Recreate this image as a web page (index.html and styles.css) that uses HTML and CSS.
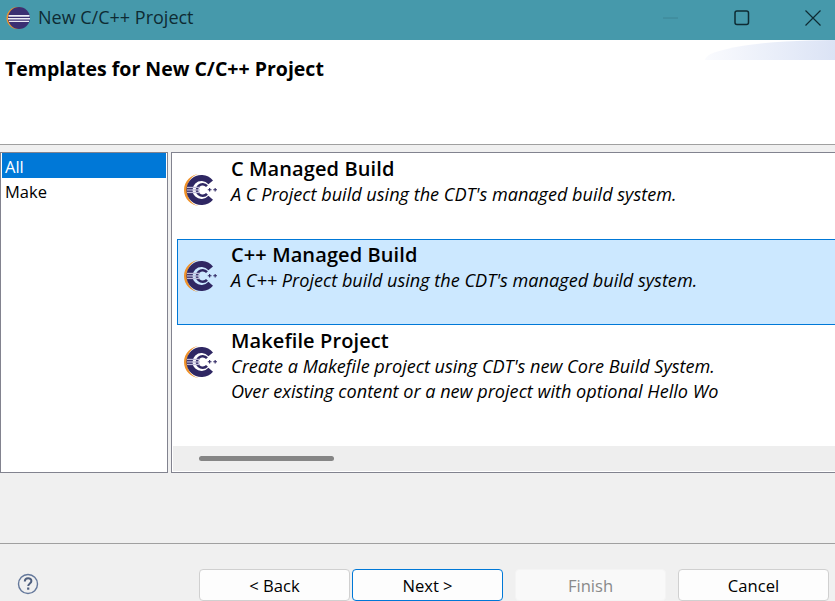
FILE: index.html
```html
<!DOCTYPE html>
<html lang="en">
<head>
<meta charset="utf-8">
<title>New C/C++ Project</title>
<link rel="stylesheet" href="styles.css">
</head>
<body>
<svg class="defs" width="0" height="0">
  <symbol id="cdt" viewBox="0 0 36 36">
    <path d="M17 2A16 16 0 0 0 17 34A13 16 0 0 1 17 2z" fill="#f0932b"/>
    <path d="M27.700 10.300A12 12 0 1 0 27.700 25.700" fill="none" stroke="#2f2763" stroke-width="6"/>
    <path d="M24 14.100A5.800 5.800 0 1 0 24 21.900" fill="none" stroke="#2f2763" stroke-width="2.600"/>
    <rect x="4" y="14.800" width="13" height="1.300" fill="#bdb8d6"/>
    <rect x="4" y="17.300" width="13" height="1.300" fill="#bdb8d6"/>
    <rect x="4" y="19.800" width="13" height="1.300" fill="#bdb8d6"/>
    <path d="M24.800 17.200h1.300v-1.300h1.100v1.300h1.300v1.100h-1.300v1.300h-1.100v-1.300h-1.300zM30.300 17.200h1.300v-1.300h1.100v1.300h1.300v1.100h-1.300v1.300h-1.100v-1.300h-1.300z" fill="#2f2763"/>
  </symbol>
</svg>
<div class="window">
  <header class="titlebar">
    <svg class="app-icon" viewBox="0 0 26 26" width="26" height="26">
      <circle cx="11.500" cy="13" r="11" fill="#f0932b"/>
      <circle cx="13" cy="13" r="11" fill="#3b2f72"/>
      <path d="M2.500 10h21v1.800h-21zM2 13h22v1.500H2zM3 15.800h20v1.200H3z" fill="#ecebf5"/>
    </svg>
    <span class="title">New C/C++ Project</span>
    <div class="controls">
      <svg class="ctl" viewBox="0 0 16 16" width="16" height="16"><path d="M0 8h15" stroke="#3d8494" stroke-width="1"/></svg>
      <svg class="ctl" viewBox="0 0 16 16" width="16" height="16"><rect x="1" y="1" width="13.500" height="13.500" rx="2" fill="none" stroke="#0e2b33" stroke-width="1.500"/></svg>
      <svg class="ctl" viewBox="0 0 16 16" width="16" height="16"><path d="M.5.500l15 15M15.500.500l-15 15" stroke="#0e2b33" stroke-width="1.200"/></svg>
    </div>
  </header>
  <section class="banner">
    <h1 class="heading">Templates for New C/C++ Project</h1>
    <div class="swoosh"></div>
  </section>
  <main class="content">
    <ul class="category-list">
      <li class="category selected">All</li>
      <li class="category">Make</li>
    </ul>
    <div class="template-panel">
      <div class="template-list">
        <div class="template">
          <svg class="template-icon"><use href="#cdt"/></svg>
          <div class="template-text">
            <div class="template-name">C Managed Build</div>
            <div class="template-desc">A C Project build using the CDT's managed build system.</div>
          </div>
        </div>
        <div class="template selected">
          <svg class="template-icon"><use href="#cdt"/></svg>
          <div class="template-text">
            <div class="template-name">C++ Managed Build</div>
            <div class="template-desc">A C++ Project build using the CDT's managed build system.</div>
          </div>
        </div>
        <div class="template">
          <svg class="template-icon"><use href="#cdt"/></svg>
          <div class="template-text">
            <div class="template-name">Makefile Project</div>
            <div class="template-desc">Create a Makefile project using CDT's new Core Build System.<br>Over existing content or a new project with optional Hello Wo</div>
          </div>
        </div>
      </div>
      <div class="scrollbar"><div class="thumb"></div></div>
    </div>
  </main>
  <footer class="footer">
    <svg class="help" viewBox="0 0 22 22" width="22" height="22">
      <circle cx="11" cy="11" r="9.500" fill="none" stroke="#64789b" stroke-width="1.400"/>
      <path d="M7.800 8.500c0-4.300 6.600-4.300 6.600-.4 0 2.400-3.200 2.400-3.200 5" fill="none" stroke="#4f5f7e" stroke-width="2"/>
      <rect x="10.100" y="14.500" width="2.200" height="2.200" fill="#4f5f7e"/>
    </svg>
    <div class="buttons">
      <button class="btn">&lt; Back</button>
      <button class="btn primary">Next &gt;</button>
      <button class="btn disabled">Finish</button>
      <button class="btn cancel">Cancel</button>
    </div>
  </footer>
</div>
</body>
</html>
```
FILE: styles.css
```css
* { box-sizing: border-box; }
html, body { margin: 0; padding: 0; overflow: hidden; }
body { width: 835px; height: 601px; font-family: "Open Sans", "Noto Sans", sans-serif; color: #000; background: #f0f0f0; }
.defs { position: absolute; }
.window { height: 601px; display: flex; flex-direction: column; overflow: hidden; }

.titlebar { height: 40px; flex: none; background: #4699ab; display: flex; align-items: center; padding-left: 6px; }
.app-icon { flex: none; margin-top: -4px; }
.title { margin-left: 6px; font-size: 18px; color: #0e2b33; margin-top: -6px; }
.controls { margin-left: auto; display: flex; gap: 55px; padding-right: 14px; margin-top: -5px; align-items: center; }

.banner { height: 105px; flex: none; background: #fff; border-bottom: 1px solid #a0a0a0; position: relative; overflow: hidden; padding: 17px 0 0 5px; }
.heading { margin: 0; font-size: 19.500px; font-weight: 700; line-height: 24px; }
.swoosh { position: absolute; right: 0; top: 0; width: 130px; height: 20px; background: linear-gradient(90deg, #fafbfe, #dbe3f5); border-top-left-radius: 130px 20px; }

.content { height: 321px; flex: none; margin-top: 7px; display: flex; gap: 3px; }
.category-list { width: 168px; flex: none; margin: 0; padding: 0 1px; list-style: none; background: #fff; border: 1px solid #82838f; font-size: 16.500px; }
.category { height: 25px; line-height: 27px; padding-left: 3px; }
.category.selected { background: #0078d7; color: #fff; }

.template-panel { flex: 1; min-width: 0; background: #fff; border: 1px solid #82838f; border-right: 0; padding: 0 0 1px 1px; display: flex; flex-direction: column; }
.template-list { flex: 1; min-height: 0; padding: 0 0 0 4px; display: flex; flex-direction: column; }
.template { height: 86px; flex: none; display: flex; align-items: flex-start; border: 1px solid transparent; margin-right: -1px; white-space: nowrap; }
.template.selected { background: #cce8ff; border-color: #0078d7; border-right: 0; }
.template-icon { width: 36px; height: 36px; margin: 18px 0 0 5px; flex: none; }
.template-text { margin-left: 12px; padding-top: 1px; }
.template-name { font-size: 20px; font-weight: 600; letter-spacing: .1px; line-height: 28px; }
.template-desc { font-size: 18.100px; font-style: italic; line-height: 25px; margin-top: -1px; }

.scrollbar { height: 25px; flex: none; background: #eee; padding: 10px 0 0 26px; }
.thumb { width: 135px; height: 5px; border-radius: 3px; background: #858585; }

.footer { flex: 1; margin-top: 70px; border-top: 1px solid #a0a0a0; position: relative; padding: 25px 0 0 17px; display: flex; align-items: flex-start; }
.help { flex: none; margin-top: 4px; }
.buttons { position: absolute; left: 199px; top: 25px; display: flex; gap: 2px; }
.btn { width: 151px; height: 32px; padding: 1px 0 0; background: #fdfdfd; border: 1px solid #d0d0d0; border-radius: 4px; font-family: inherit; font-size: 16.600px; color: #000; }
.btn.primary { border-color: #0078d7; }
.btn.disabled { background: #f9f9f9; border-color: #f4f4f4; color: #8a8a8a; margin-left: 10px; }
.btn.cancel { margin-left: 10px; }
```
